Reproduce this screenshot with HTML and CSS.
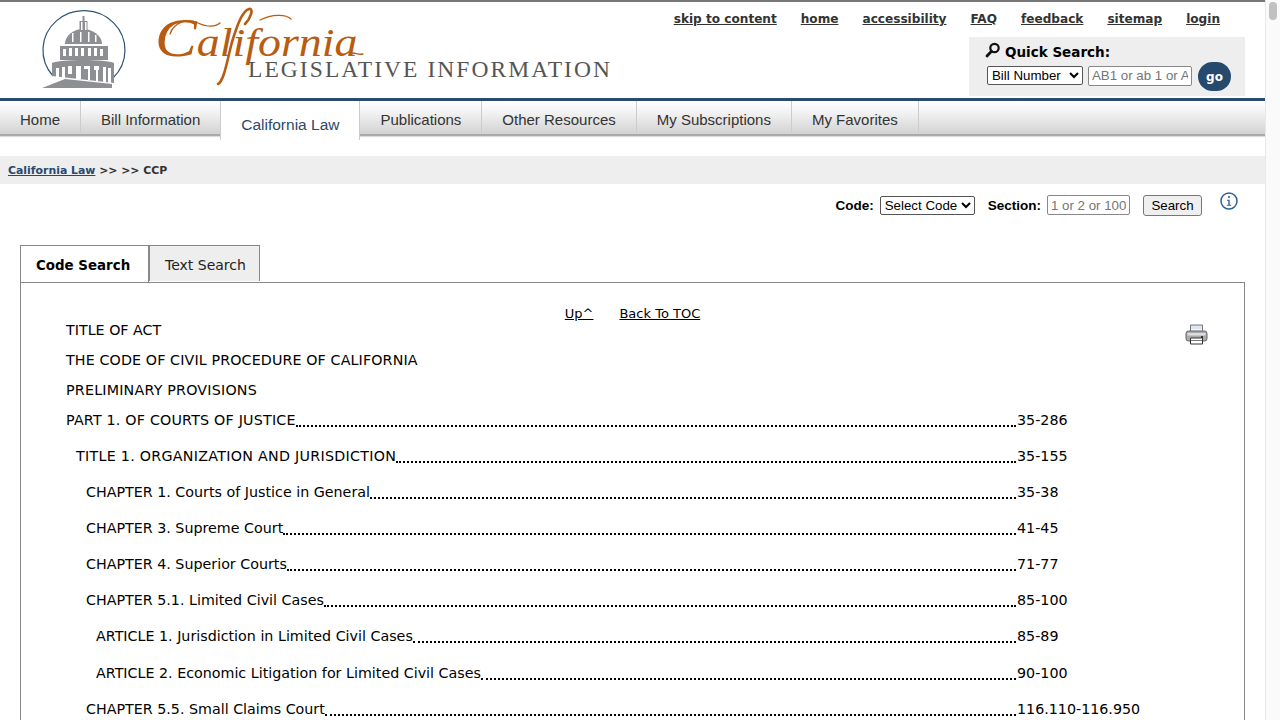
FILE: index.html
```html
<!DOCTYPE html>
<html lang="en">
<head>
<meta charset="utf-8">
<title>California Legislative Information</title>
<link rel="stylesheet" href="styles.css">
</head>
<body>
<div class="window">
<div class="page">
  <header class="masthead">
    <svg class="logo" width="640" height="96" viewBox="0 2 640 96" role="img" aria-label="California Legislative Information">
      <path d="M53 76A41 39.500 0 1 1 113 78" fill="none" stroke="#2f5378" stroke-width="1.2"/>
      <g fill="#8e8f92">
        <path d="M82.500 16h2v5h-2z"/>
        <path d="M79.500 21h8v10h-8z"/>
        <path d="M65 44c0-8 8-15 18-15s19 7 19 15z"/>
        <path d="M60 46h48v14H60z"/>
        <path d="M52 63c8-4 54-4 62 0v20l-62-7z"/>
        <path d="M42 88l23-9 47 5v4z"/>
      </g>
      <g fill="#fff">
        <path d="M81 22h1.500v8H81zM85 22h1.500v8H85z"/>
        <path d="M63 49h3v7h-3zM69 48h3v8h-3zM75 48h3v8h-3zM81 48h3v8h-3zM88 48h3v8h-3zM94 48h3v8h-3zM100 49h3v7h-3z"/>
        <path d="M56 68h3v10h-3zM62 67h3v11h-3zM68 66h4v8h-4zM76 66h5v13h-5zM84 66h6v3h-6zM88 66h2v14h-2zM94 66h5v4h-5zM96 66h2v16h-2zM103 67h3v15h-3zM108 68h3v15h-3z"/>
        <path d="M72 33h1.500v9H72zM80 32h1.500v10H80zM88 32h1.500v10H88zM95 35h1.500v7H95z"/>
      </g>
      <text class="logo-script" transform="translate(155 56) scale(1.12 1)"><tspan class="logo-cap">C</tspan><tspan>alifornia</tspan></text>
      <path class="logo-swash" d="M218 84c6-3 9-23 14-42 5-16 10-31 17-33 5-1 2 9-4 15"/>
      <path class="logo-swash thin" d="M170 34c4-12 18-16 28-11 9 4 17 4 22 0M260 20c12-6 26-6 31-1M352 53c4 0 7 2 11 1"/>
      <text class="logo-sub" x="248" y="77" textLength="362" lengthAdjust="spacing">LEGISLATIVE INFORMATION</text>
    </svg>
    <div class="masthead-side">
      <nav class="toplinks">
        <a href="#">skip to content</a>
        <a href="#">home</a>
        <a href="#">accessibility</a>
        <a href="#">FAQ</a>
        <a href="#">feedback</a>
        <a href="#">sitemap</a>
        <a href="#">login</a>
      </nav>
      <form class="quick">
        <div class="quick-title">
          <svg class="quick-icon" width="16" height="16" viewBox="0 0 16 16"><circle cx="9.500" cy="6" r="4.200" fill="none" stroke="#111" stroke-width="2.200"/><path d="M6.500 9.200L2 14" stroke="#111" stroke-width="2.800" stroke-linecap="round"/></svg>
          <span>Quick Search:</span>
        </div>
        <div class="quick-row">
          <select class="quick-select"><option>Bill Number</option></select>
          <input class="quick-input" type="text" placeholder="AB1 or ab 1 or AB 1">
          <button class="go" type="button">go</button>
        </div>
      </form>
    </div>
  </header>

  <nav class="mainnav">
    <a href="#">Home</a>
    <a href="#">Bill Information</a>
    <a href="#" class="active">California Law</a>
    <a href="#">Publications</a>
    <a href="#">Other Resources</a>
    <a href="#">My Subscriptions</a>
    <a href="#">My Favorites</a>
  </nav>

  <div class="crumbs"><a href="#">California Law</a> &gt;&gt; &gt;&gt; CCP</div>

  <form class="codebar">
    <label class="cb-label">Code:</label>
    <select class="cb-select"><option>Select Code</option></select>
    <label class="cb-label cb-section">Section:</label>
    <input class="cb-input" type="text" placeholder="1 or 2 or 100">
    <button class="cb-button" type="button">Search</button>
    <svg class="info" width="18" height="18" viewBox="0 0 18 18"><circle cx="9" cy="9" r="8" fill="none" stroke="#2f5f95" stroke-width="1.500"/><circle cx="9" cy="5" r="1.100" fill="#2f5f95"/><path d="M7 7.800h2.700v5H11.200v1H6.800v-1h1.500v-4H7z" fill="#2f5f95"/></svg>
  </form>

  <div class="tabs">
    <a href="#" class="tab on">Code Search</a>
    <a href="#" class="tab">Text Search</a>
  </div>

  <section class="panel">
    <svg class="printer" width="23" height="21" viewBox="0 0 23 21">
      <path d="M5.500 1h12v8h-12z" fill="#dfe4f6" stroke="#777"/>
      <path d="M6 5h11v4H6z" fill="#f4f4f4"/>
      <rect x="1" y="7" width="21" height="10" rx="2.500" fill="#a9abad" stroke="#666"/>
      <path d="M2.500 9h18v2.500h-18z" fill="#dcdcdc"/>
      <path d="M5.500 14h12v6h-12z" fill="#fff" stroke="#333"/>
      <path d="M6 16.500h11" stroke="#777"/>
      <rect x="16" y="12" width="2" height="2" fill="#333"/>
    </svg>
    <div class="panel-links"><a href="#">Up^</a><a href="#">Back To TOC</a></div>
    <div class="plain">TITLE OF ACT</div>
    <div class="plain caps-s">THE CODE OF CIVIL PROCEDURE OF CALIFORNIA</div>
    <div class="plain caps">PRELIMINARY PROVISIONS</div>
    <div class="entry caps"><span>PART 1. OF COURTS OF JUSTICE</span><i></i><b>35-286</b></div>
    <div class="entry l1 caps-l"><span>TITLE 1. ORGANIZATION AND JURISDICTION</span><i></i><b>35-155</b></div>
    <div class="entry l2"><span>CHAPTER 1. Courts of Justice in General</span><i></i><b>35-38</b></div>
    <div class="entry l2"><span>CHAPTER 3. Supreme Court</span><i></i><b>41-45</b></div>
    <div class="entry l2"><span>CHAPTER 4. Superior Courts</span><i></i><b>71-77</b></div>
    <div class="entry l2"><span>CHAPTER 5.1. Limited Civil Cases</span><i></i><b>85-100</b></div>
    <div class="entry l3"><span>ARTICLE 1. Jurisdiction in Limited Civil Cases</span><i></i><b>85-89</b></div>
    <div class="entry l3 tall"><span>ARTICLE 2. Economic Litigation for Limited Civil Cases</span><i></i><b>90-100</b></div>
    <div class="entry l2"><span>CHAPTER 5.5. Small Claims Court</span><i></i><b>116.110-116.950</b></div>
  </section>
</div>
<div class="scrollbar"><div class="thumb"></div></div>
</div>
</body>
</html>
```
FILE: styles.css
```css
* { box-sizing: border-box; }
html, body { margin: 0; height: 720px; overflow: hidden; background: #fff; }
body { font-family: "DejaVu Sans", Verdana, sans-serif; color: #000; }
.window { display: flex; height: 720px; overflow: hidden; }
.page { width: 1265px; flex: none; }
.scrollbar { width: 15px; flex: none; background: #fafafa; border-left: 1px solid #e8e8e8; padding: 2px 3px 0; }
.thumb { width: 8px; height: 18px; background: #c1c1c1; border-radius: 4px; }

.masthead { height: 98px; border-top: 2px solid #777; display: flex; justify-content: space-between; }
.logo { flex: none; display: block; }
.logo-script { font-family: "Liberation Serif", serif; font-style: italic; font-size: 41px; fill: #b85c12; }
.logo-cap { font-size: 56px; }
.logo-swash { fill: none; stroke: #b85c12; stroke-width: 2.6; stroke-linecap: round; }
.logo-swash.thin { stroke-width: 1.3; }
.logo-sub { font-family: "Liberation Serif", serif; font-size: 23.500px; fill: #555; }
.masthead-side { width: 600px; display: flex; flex-direction: column; align-items: flex-end; padding-right: 20px; }
.toplinks { display: flex; gap: 24px; padding: 9px 25px 0 0; height: 35px; font-size: 12.100px; font-weight: 700; line-height: 16px; white-space: nowrap; }
.toplinks a { color: #333; }
.quick { width: 276px; height: 59px; background: #eee; padding: 4px 0 0 16px; }
.quick-title { display: flex; align-items: center; gap: 4px; font-size: 13.500px; font-weight: 700; line-height: 20px; height: 22px; }
.quick-icon { margin-top: -4px; }
.quick-row { display: flex; align-items: center; gap: 5px; margin-top: -1px; padding-left: 2px; }
.quick-select { width: 96px; height: 19px; margin-bottom: 2px; font: 13.300px "Liberation Sans", Arial, sans-serif; background: #fff; border: 1px solid #555; border-radius: 2px; padding: 0; }
.quick-input { width: 104px; height: 20px; margin-bottom: 2px; font: 13.300px "Liberation Sans", Arial, sans-serif; border: 1px solid #888; border-radius: 2px; padding: 1px 3px; }
.quick-input::placeholder, .cb-input::placeholder { color: #757575; }
.go { width: 33px; height: 29px; margin-left: 1px; border: 0; border-radius: 15px; background: #264a6e; color: #fff; font: 700 12px "DejaVu Sans", sans-serif; padding: 0; }

.mainnav { height: 38px; border-top: 3px solid #2a4a6e; display: flex; background: linear-gradient(#fff, #f2f2f2 35%, #d2d2d2); border-bottom: 2px solid #aaa; box-shadow: 0 1px 1px #ddd; font: 15px "Liberation Sans", Arial, sans-serif; }
.mainnav a { padding: 10px 20px 0; border-right: 1px solid #ccc; color: #333; text-decoration: none; height: 32px; line-height: 18px; }
.mainnav a.active { height: 39px; background: #fff; color: #2a4a6e; border-left: 1px solid #ccc; margin-left: -1px; padding-top: 15px; padding-left: 20px; position: relative; font-size: 15.500px; }

.crumbs { margin-top: 20px; height: 28px; background: #eee; padding-left: 8px; font-size: 10.900px; font-weight: 700; line-height: 29px; color: #333; }
.crumbs a { color: #264a6e; }

.codebar { display: flex; align-items: center; justify-content: flex-end; height: 42px; padding-right: 27px; font: 13.500px "Liberation Sans", Arial, sans-serif; }
.cb-label { font-weight: 700; }
.cb-select { width: 95px; height: 19px; margin-left: 6px; font: 13.300px "Liberation Sans", Arial, sans-serif; background: #fff; border: 1px solid #555; border-radius: 2px; padding: 0; }
.cb-section { margin-left: 13px; }
.cb-input { width: 83px; height: 20px; margin-left: 6px; font: 13.300px "Liberation Sans", Arial, sans-serif; border: 1px solid #888; border-radius: 2px; padding: 1px 3px; }
.cb-button { width: 59px; height: 21px; margin-left: 13px; font: 13.300px "Liberation Sans", Arial, sans-serif; background: #efefef; border: 1px solid #777; border-radius: 3px; padding: 0; }
.info { margin-left: 18px; margin-top: -8px; }

.tabs { display: flex; margin: 19px 0 0 20px; height: 37px; font-size: 14px; }
.tab { height: 36px; padding: 0 13px 0 15px; border: 1px solid #888; border-bottom: 0; background: #eee; color: #222; text-decoration: none; line-height: 39px; }
.tab.on { width: 129px; height: 37px; padding: 0 0 0 15px; background: #fff; color: #000; font-weight: 700; font-size: 13.400px; margin-bottom: -1px; position: relative; z-index: 1; }

.panel { position: relative; margin: 0 20px; height: 460px; border: 1px solid #888; padding: 21px 0 0 45px; font-size: 14.280px; }
.printer { position: absolute; top: 41px; right: 36px; }
.panel-links { display: flex; justify-content: center; gap: 26px; height: 18px; font-size: 13px; line-height: 20px; margin-left: -45px; }
.panel-links a { color: #000; }
.plain { height: 30px; line-height: 30px; }
.panel-links + .plain { margin-top: -7px; }
.entry { display: flex; height: 36px; line-height: 30px; padding-right: 27px; }
.entry span { flex: none; }
.entry i { flex: 1; height: 22px; border-bottom: 2px dotted #000; margin-right: 1px; }
.entry b { flex: none; width: 200px; font-weight: 400; }
.caps-s { letter-spacing: .12px; }
.caps { letter-spacing: .2px; }
.caps-l { letter-spacing: .28px; }
.entry.caps b, .entry.caps-l b { letter-spacing: 0; }
.l1 { padding-left: 10px; }
.l2 { padding-left: 20px; }
.l3 { padding-left: 30px; }
.tall { height: 37px; padding-top: 1px; }
```
